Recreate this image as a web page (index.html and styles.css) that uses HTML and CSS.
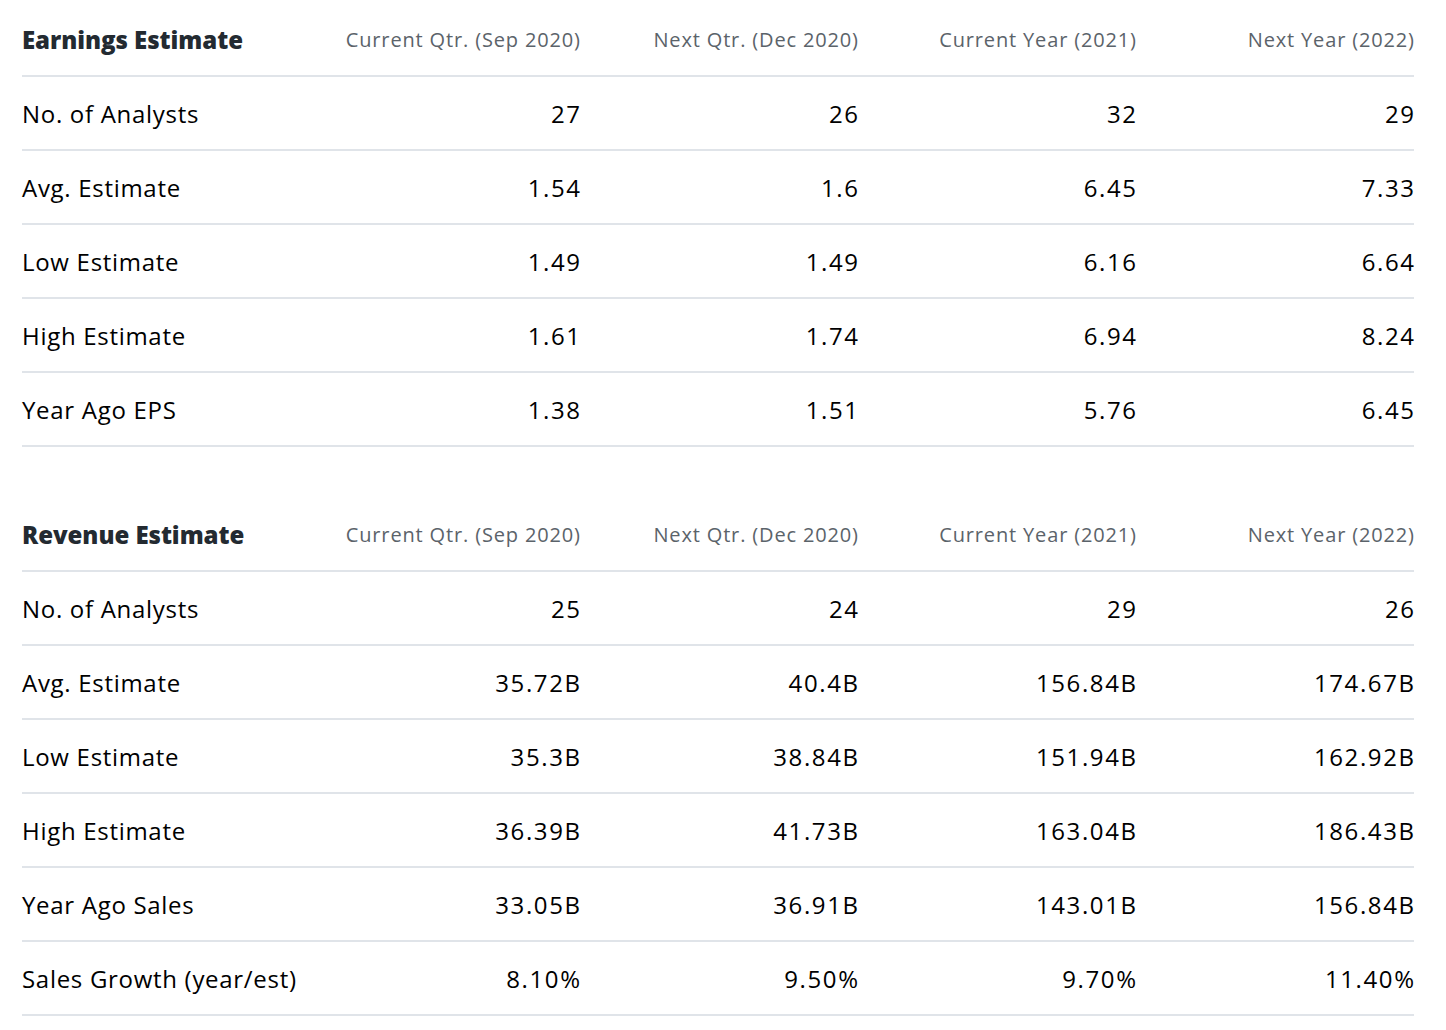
FILE: index.html
```html
<!DOCTYPE html>
<html>
<head>
<meta charset="utf-8">
<link rel="stylesheet" href="styles.css">
</head>
<body>
<div class="page">
  <table class="est">
    <thead>
      <tr><th class="title">Earnings Estimate</th><th><span>Current Qtr. (Sep 2020)</span></th><th><span>Next Qtr. (Dec 2020)</span></th><th><span>Current Year (2021)</span></th><th><span>Next Year (2022)</span></th></tr>
    </thead>
    <tbody>
      <tr><td>No. of Analysts</td><td><span>27</span></td><td><span>26</span></td><td><span>32</span></td><td><span>29</span></td></tr>
      <tr><td>Avg. Estimate</td><td><span>1.54</span></td><td><span>1.6</span></td><td><span>6.45</span></td><td><span>7.33</span></td></tr>
      <tr><td>Low Estimate</td><td><span>1.49</span></td><td><span>1.49</span></td><td><span>6.16</span></td><td><span>6.64</span></td></tr>
      <tr><td>High Estimate</td><td><span>1.61</span></td><td><span>1.74</span></td><td><span>6.94</span></td><td><span>8.24</span></td></tr>
      <tr><td>Year Ago EPS</td><td><span>1.38</span></td><td><span>1.51</span></td><td><span>5.76</span></td><td><span>6.45</span></td></tr>
    </tbody>
  </table>
  <table class="est second">
    <thead>
      <tr><th class="title">Revenue Estimate</th><th><span>Current Qtr. (Sep 2020)</span></th><th><span>Next Qtr. (Dec 2020)</span></th><th><span>Current Year (2021)</span></th><th><span>Next Year (2022)</span></th></tr>
    </thead>
    <tbody>
      <tr><td>No. of Analysts</td><td><span>25</span></td><td><span>24</span></td><td><span>29</span></td><td><span>26</span></td></tr>
      <tr><td>Avg. Estimate</td><td><span>35.72B</span></td><td><span>40.4B</span></td><td><span>156.84B</span></td><td><span>174.67B</span></td></tr>
      <tr><td>Low Estimate</td><td><span>35.3B</span></td><td><span>38.84B</span></td><td><span>151.94B</span></td><td><span>162.92B</span></td></tr>
      <tr><td>High Estimate</td><td><span>36.39B</span></td><td><span>41.73B</span></td><td><span>163.04B</span></td><td><span>186.43B</span></td></tr>
      <tr><td>Year Ago Sales</td><td><span>33.05B</span></td><td><span>36.91B</span></td><td><span>143.01B</span></td><td><span>156.84B</span></td></tr>
      <tr><td>Sales Growth (year/est)</td><td><span>8.10%</span></td><td><span>9.50%</span></td><td><span>9.70%</span></td><td><span>11.40%</span></td></tr>
    </tbody>
  </table>
</div>
</body>
</html>
```
FILE: styles.css
```css
html, body {
  margin: 0;
  padding: 0;
  background: #fff;
}
.page {
  padding: 3px 32px 0 22px;
  font-family: "Open Sans", "Noto Sans", sans-serif;
}
.est {
  width: 1392px;
  border-collapse: collapse;
  table-layout: fixed;
}
.est.second {
  margin-top: 51px;
}
.est th, .est td {
  height: 72px;
  padding: 0;
  border-bottom: 2px solid #e0e4e9;
  text-align: right;
  vertical-align: middle;
  white-space: nowrap;
}
.est th:first-child, .est td:first-child {
  width: 280px;
  text-align: left;
}
.est th {
  font-size: 20px;
  font-weight: 400;
  color: #5b636a;
  letter-spacing: 0.85px;
}
.est th span {
  margin-right: -0.85px;
}
.est th.title {
  font-size: 24px;
  font-weight: 800;
  color: #232a31;
  letter-spacing: -0.05px;
}
.est td {
  font-size: 24px;
  color: #000;
  letter-spacing: 1.6px;
}
.est td span {
  margin-right: -1.6px;
}
.est td:first-child {
  letter-spacing: 0.7px;
}
```
